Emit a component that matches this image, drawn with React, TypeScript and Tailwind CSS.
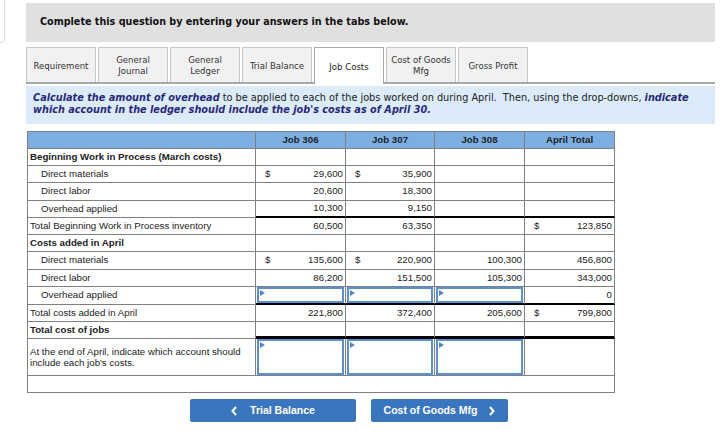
import React from "react";

const tahoma = { fontFamily: '"DejaVu Sans Condensed", "DejaVu Sans", sans-serif' };

function Tri() {
  return (
    <span className="absolute left-[1px] top-[1px] w-0 h-0 border-t-[3px] border-b-[3px] border-l-[5px] border-t-transparent border-b-transparent border-l-[#4f86cf]" />
  );
}

function InputBox({ tall }: { tall?: boolean }) {
  return (
    <div className={`relative mx-[1px] border-2 border-[#5c8ed2] bg-white ${tall ? "h-[36px]" : "h-[16px]"}`}>
      <Tri />
    </div>
  );
}

type Cell = { d?: boolean; v?: string; input?: boolean } | null;

function NumCell({ c }: { c: Cell }) {
  if (!c) return null;
  if (c.input) return <InputBox />;
  return (
    <div className="flex justify-between pl-[9px] pr-[2px]">
      <span>{c.d ? "$" : ""}</span>
      <span>{c.v}</span>
    </div>
  );
}

type Row = {
  label: string;
  kind: "bold" | "indent" | "plain";
  cells: Cell[];
  blackBottom?: boolean;
  tall?: boolean;
};

const rows: Row[] = [
  { label: "Beginning Work in Process (March costs)", kind: "bold", cells: [null, null, null, null] },
  { label: "Direct materials", kind: "indent", cells: [{ d: true, v: "29,600" }, { d: true, v: "35,900" }, null, null] },
  { label: "Direct labor", kind: "indent", cells: [{ v: "20,600" }, { v: "18,300" }, null, null], tall: true },
  { label: "Overhead applied", kind: "indent", cells: [{ v: "10,300" }, { v: "9,150" }, null, null], blackBottom: true },
  { label: "Total Beginning Work in Process inventory", kind: "plain", cells: [{ v: "60,500" }, { v: "63,350" }, null, { d: true, v: "123,850" }] },
  { label: "Costs added in April", kind: "bold", cells: [null, null, null, null] },
  { label: "Direct materials", kind: "indent", cells: [{ d: true, v: "135,600" }, { d: true, v: "220,900" }, { v: "100,300" }, { v: "456,800" }], tall: true },
  { label: "Direct labor", kind: "indent", cells: [{ v: "86,200" }, { v: "151,500" }, { v: "105,300" }, { v: "343,000" }] },
  { label: "Overhead applied", kind: "indent", cells: [{ input: true }, { input: true }, { input: true }, { v: "0" }], blackBottom: true },
  { label: "Total costs added in April", kind: "plain", cells: [{ v: "221,800" }, { v: "372,400" }, { v: "205,600" }, { d: true, v: "799,800" }] },
];

const colW = ["w-[228px]", "w-[90px]", "w-[89px]", "w-[90px]", "w-[90px]"];

export default function App() {
  const tabs: [string, string?][] = [
    ["Requirement"],
    ["General", "Journal"],
    ["General", "Ledger"],
    ["Trial Balance"],
    ["Job Costs"],
    ["Cost of Goods", "Mfg"],
    ["Gross Profit"],
  ];
  return (
    <div className="w-[728px] h-[433px] bg-white flex overflow-hidden text-[#222]">
      <div className="w-[5px] h-[43px] border-r border-b border-[#dcdcdc] rounded-br-[5px] shrink-0" />
      <div className="ml-[21px] w-[689px] flex flex-col">
        <div className="mt-[3px] h-[39px] bg-[#e0e0e0] flex items-center pl-[14px]">
          <span className="text-[10.7px] font-bold text-[#111]" style={tahoma}>
            Complete this question by entering your answers in the tabs below.
          </span>
        </div>

        <div className="mt-[5px] h-[37px] flex items-end gap-[2px] border-b-2 border-[#a8a8a8]">
          {tabs.map((t, i) => {
            const active = t[0] === "Job Costs";
            return (
              <div
                key={i}
                className={`w-[70px] flex flex-col items-center justify-center text-[9.5px] leading-[11px] border border-b-0 ${
                  active
                    ? "h-[37px] -mb-[2px] bg-white border-[#a8a8a8] text-[#222]"
                    : "h-[35px] bg-[#f1f1f1] border-[#c6c6c6] text-[#333]"
                }`}
                style={tahoma}
              >
                <span>{t[0]}</span>
                {t[1] && <span>{t[1]}</span>}
              </div>
            );
          })}
        </div>

        <div className="mt-[2px] h-[38px] bg-[#dcebf9] pl-[7px] pt-[6px] text-[10.8px] leading-[12px] text-[#222] whitespace-nowrap" style={tahoma}>
          <b className="italic text-[#28287a]">Calculate the amount of overhead</b> to be applied to each of the jobs worked on during April.&nbsp; Then, using the drop-downs, <b className="italic text-[#28287a]">indicate</b>
          <br />
          <b className="italic text-[#28287a]">which account in the ledger should include the job's costs as of April 30.</b>
        </div>

        <table
          className="mt-[7px] ml-[1px] border-separate border-spacing-0 table-fixed w-[588px] border-l border-t border-[#808080] text-[9.7px] text-[#222]"
          style={{ fontFamily: '"Liberation Sans", Arial, sans-serif' }}
        >
          <colgroup>
            {colW.map((w, i) => (
              <col key={i} className={w} />
            ))}
          </colgroup>
          <thead>
            <tr className="h-[17px] bg-[#7caee2]">
              {["", "Job 306", "Job 307", "Job 308", "April Total"].map((h, i) => (
                <th key={i} className="border-r border-b border-[#808080] font-bold text-center p-0">
                  {h}
                </th>
              ))}
            </tr>
          </thead>
          <tbody>
            {rows.map((r, ri) => (
              <tr key={ri} className={r.tall ? "h-[18px]" : "h-[17px]"}>
                <td
                  className={`border-r border-b border-[#808080] p-0 whitespace-nowrap ${
                    r.kind === "bold" ? "font-bold pl-[2px]" : r.kind === "indent" ? "pl-[13px]" : "pl-[2px]"
                  }`}
                >
                  {r.label}
                </td>
                {r.cells.map((c, ci) => (
                  <td
                    key={ci}
                    className={`border-r p-0 ${r.blackBottom ? "border-b-2 border-b-black border-r-[#808080]" : "border-b border-[#808080]"}`}
                  >
                    <NumCell c={c} />
                  </td>
                ))}
              </tr>
            ))}
            <tr className="h-[17px]">
              <td className="border-r border-b border-[#808080] p-0 pl-[2px] font-bold">Total cost of jobs</td>
              {[0, 1, 2, 3].map((i) => (
                <td key={i} className="border-r border-[#808080] border-b-[3px] border-b-black p-0" />
              ))}
            </tr>
            <tr className="h-[37px]">
              <td className="border-r border-b border-[#808080] p-0 pl-[2px] text-[9.7px] leading-[11px] align-middle">
                At the end of April, indicate which account should
                <br />
                include each job's costs.
              </td>
              {[0, 1, 2].map((i) => (
                <td key={i} className="border-r border-b border-[#808080] p-0 align-top">
                  <InputBox tall />
                </td>
              ))}
              <td className="border-r border-b border-[#808080] p-0" />
            </tr>
            <tr className="h-[17px]">
              <td colSpan={5} className="border-r border-b border-[#808080] p-0" />
            </tr>
          </tbody>
        </table>

        <div
          className="mt-[6px] ml-[164px] flex gap-[15px] text-[10.5px] font-bold text-white"
          style={{ fontFamily: '"Liberation Sans", Arial, sans-serif' }}
        >
          <div className="w-[166px] h-[23px] bg-[#3a76be] rounded-[2px] flex items-center justify-center gap-[13px]">
            <svg width="6" height="10" viewBox="0 0 6 10">
              <path d="M5 1 L1.5 5 L5 9" stroke="white" strokeWidth="2" fill="none" />
            </svg>
            <span>Trial Balance</span>
          </div>
          <div className="w-[137px] h-[23px] bg-[#3a76be] rounded-[2px] flex items-center justify-center gap-[12px]">
            <span>Cost of Goods Mfg</span>
            <svg width="6" height="10" viewBox="0 0 6 10">
              <path d="M1 1 L4.5 5 L1 9" stroke="white" strokeWidth="2" fill="none" />
            </svg>
          </div>
        </div>
      </div>
    </div>
  );
}
